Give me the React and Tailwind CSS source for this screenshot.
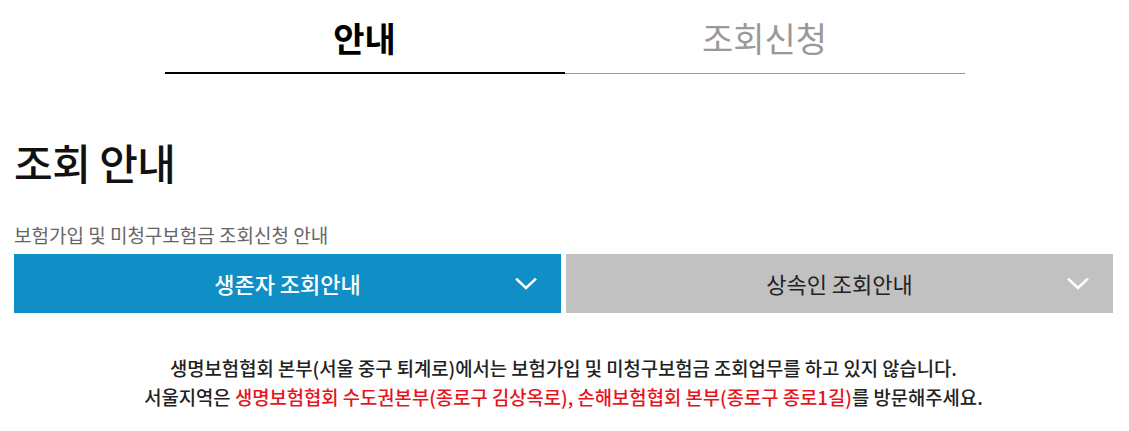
import React from "react";

function Chevron() {
  return (
    <svg width="22" height="14" viewBox="0 0 22 14" fill="none" className="shrink-0">
      <path d="M2 2.5 L11 11 L20 2.5" stroke="white" strokeWidth="2.6" strokeLinecap="square" />
    </svg>
  );
}

export default function App() {
  return (
    <div className="bg-white w-[1129px] h-[431px] overflow-hidden" style={{ fontFamily: '"Noto Sans CJK KR", "Noto Sans", sans-serif' }}>
      <div className="w-[800px] mx-auto flex">
        <div className="flex-1 h-[74px] flex items-center justify-center border-b-2 border-black text-[34px] font-bold text-black pt-[2px]">
          안내
        </div>
        <div className="flex-1 h-[74px] flex items-center justify-center border-b border-[#999] text-[34px] text-[#999] pt-[2px]">
          조회신청
        </div>
      </div>

      <div className="pl-[14px] pr-[16px]">
        <h1 className="mt-[60px] text-[42px] font-medium leading-[56px] text-[#111] tracking-[-0.5px]">조회 안내</h1>
        <p className="mt-[33px] text-[19px] leading-[24px] text-[#666]">보험가입 및 미청구보험금 조회신청 안내</p>
        <div className="mt-[7px] grid grid-cols-2 gap-[5px]">
          <div className="h-[59px] bg-[#0f8fc5] relative flex items-center justify-center">
            <span className="text-[22px] font-medium text-white">생존자 조회안내</span>
            <span className="absolute right-[24px] top-1/2 -translate-y-1/2 flex"><Chevron /></span>
          </div>
          <div className="h-[59px] bg-[#c1c1c1] relative flex items-center justify-center">
            <span className="text-[22px] text-[#222]">상속인 조회안내</span>
            <span className="absolute right-[24px] top-1/2 -translate-y-1/2 flex"><Chevron /></span>
          </div>
        </div>
        <div className="mt-[40px] text-center text-[18.8px] leading-[29px] font-medium text-[#222]">
          <p>생명보험협회 본부(서울 중구 퇴계로)에서는 보험가입 및 미청구보험금 조회업무를 하고 있지 않습니다.</p>
          <p>
            서울지역은 <span className="text-[#e5141d]">생명보험협회 수도권본부(종로구 김상옥로), 손해보험협회 본부(종로구 종로1길)</span>를 방문해주세요.
          </p>
        </div>
      </div>
    </div>
  );
}
